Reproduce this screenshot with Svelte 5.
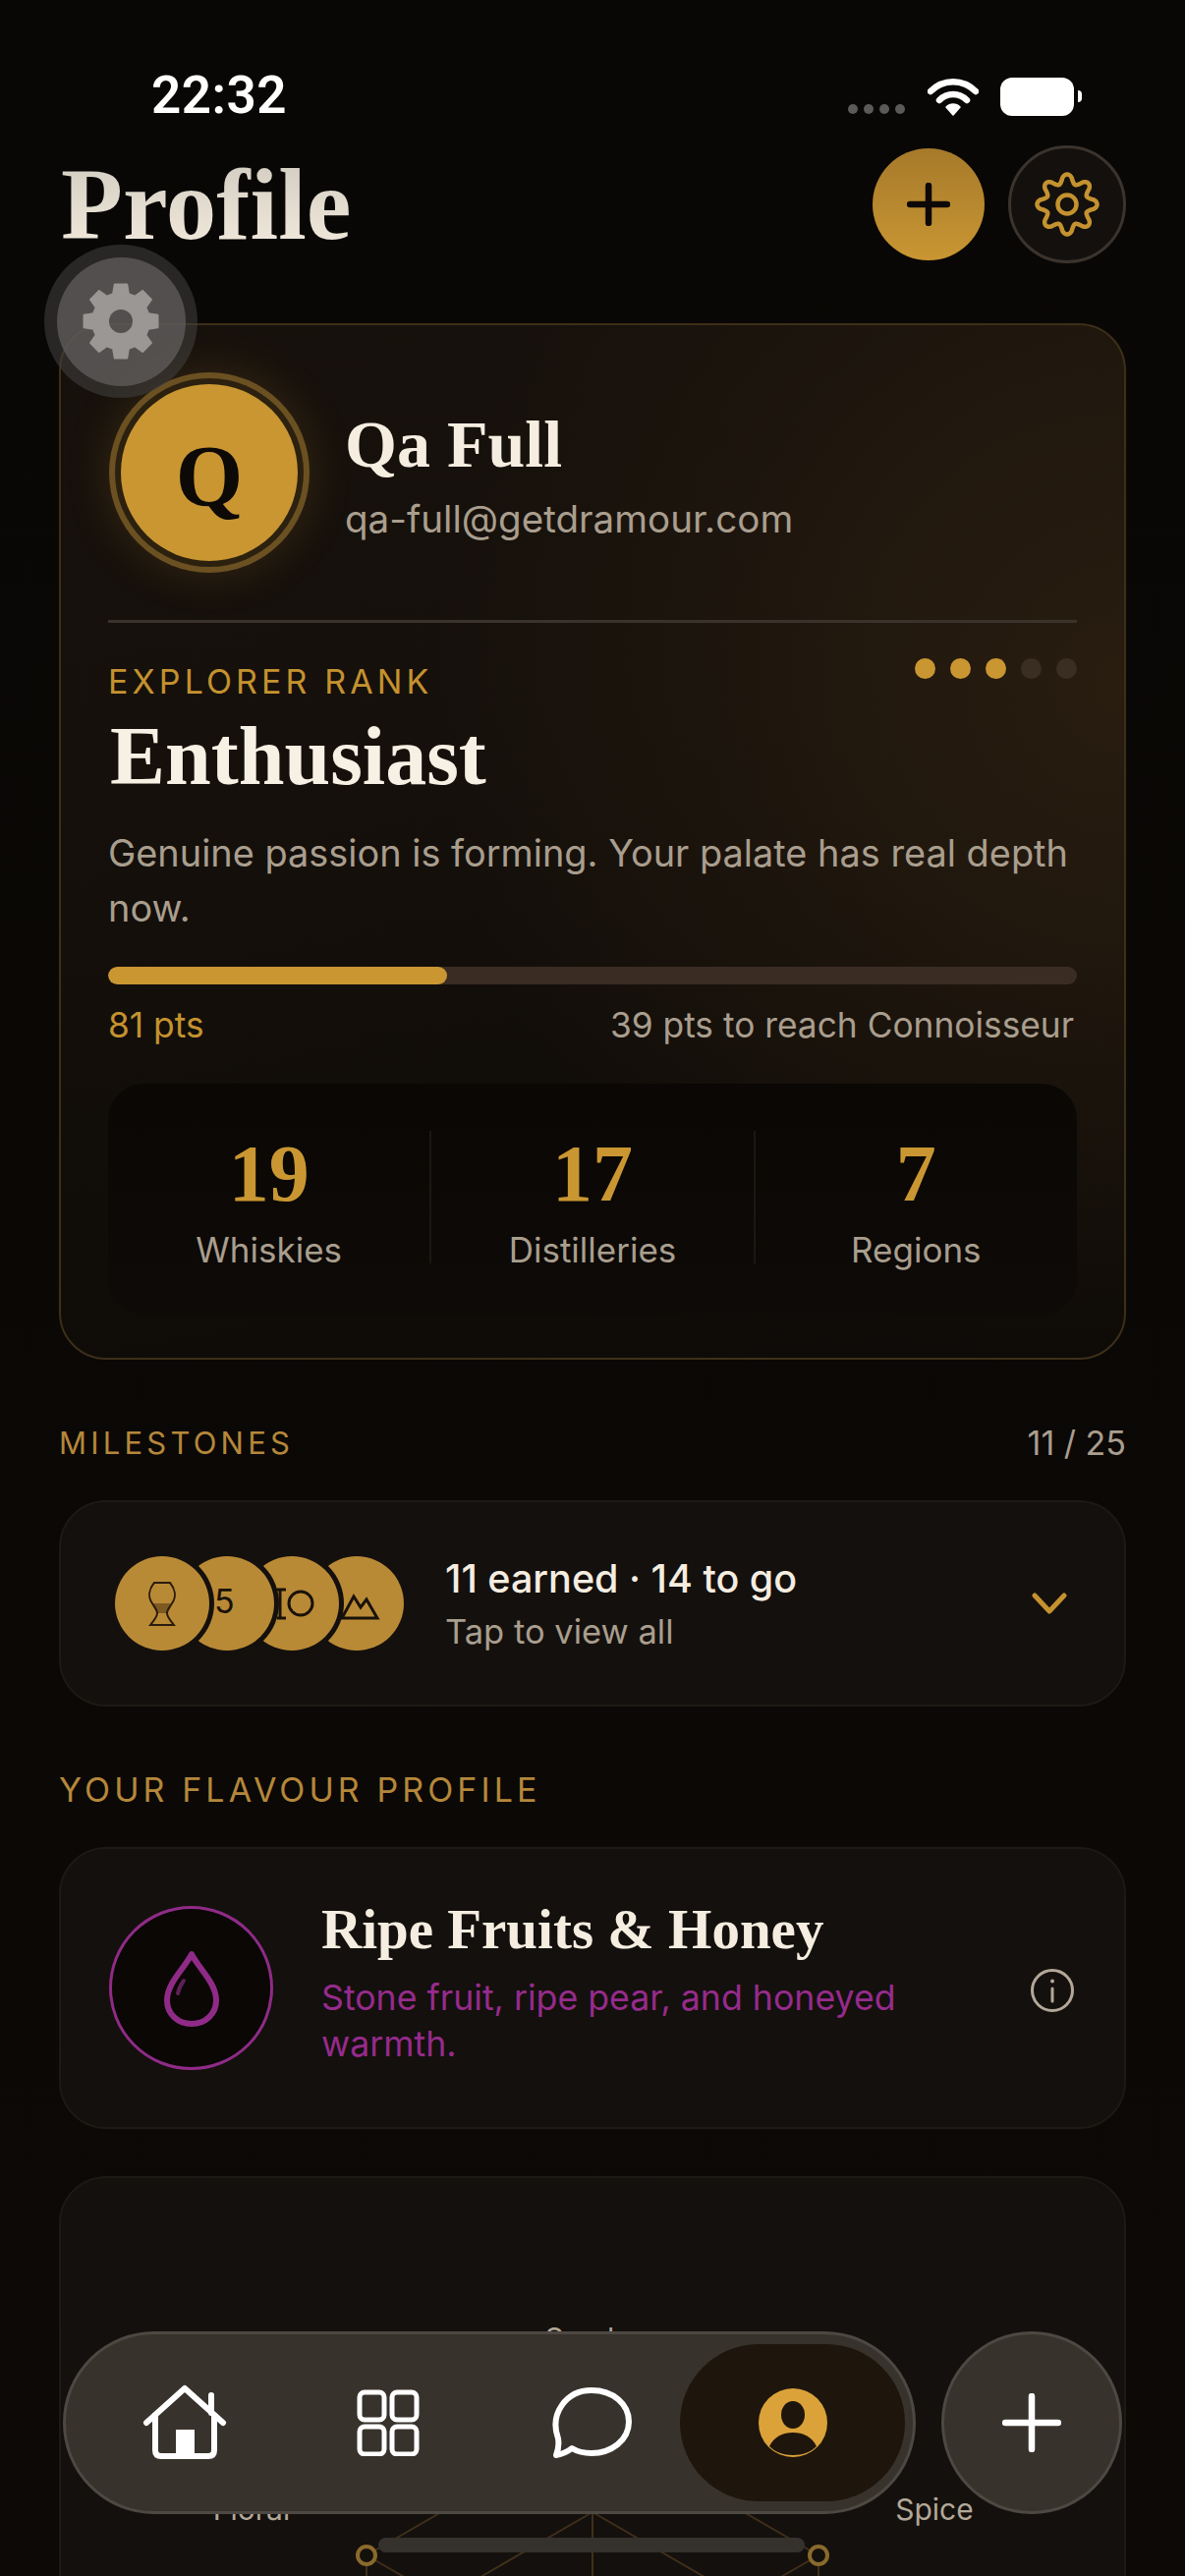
<script lang="ts">
  const stats = [
    { value: '19', label: 'Whiskies' },
    { value: '17', label: 'Distilleries' },
    { value: '7', label: 'Regions' },
  ];
  const rankDots = [true, true, true, false, false];

  // polar gear outlines, teeth = 8
  function wavyGear(cx: number, cy: number, r: number, amp: number) {
    const pts: string[] = [];
    for (let i = 0; i < 240; i++) {
      const a = (i / 240) * Math.PI * 2 - Math.PI / 2;
      const k = Math.cos(a * 8 + Math.PI * 4);
      const rad = r + amp * (k > 0 ? Math.pow(k, 0.7) : -Math.pow(-k, 0.9));
      pts.push(`${(cx + rad * Math.cos(a)).toFixed(2)} ${(cy + rad * Math.sin(a)).toFixed(2)}`);
    }
    return 'M' + pts.join('L') + 'Z';
  }

  function toothGear(cx: number, cy: number, ro: number, ri: number, hole: number) {
    const pts: string[] = [];
    for (let t = 0; t < 8; t++) {
      const c = (t / 8) * Math.PI * 2 - Math.PI / 2;
      const step = Math.PI / 8;
      [[-0.7, ri], [-0.42, ro], [0.42, ro], [0.7, ri]].forEach(([o, r]) => {
        const a = c + o * step;
        pts.push(`${(cx + r * Math.cos(a)).toFixed(2)} ${(cy + r * Math.sin(a)).toFixed(2)}`);
      });
    }
    const ring = `M${cx - hole} ${cy}a${hole} ${hole} 0 1 0 ${hole * 2} 0a${hole} ${hole} 0 1 0 ${-hole * 2} 0Z`;
    return 'M' + pts.join('L') + 'Z' + ring;
  }
</script>

<div class="page">
  <div class="status">
    <span class="time">22:32</span>
    <div class="status-right">
      <div class="signal"><i></i><i></i><i></i><i></i></div>
      <svg class="wifi" width="52" height="40" viewBox="0 0 52 40">
        <path d="M3 14 C16 1 36 1 49 14" fill="none" stroke="#fff" stroke-width="6.5" stroke-linecap="round" />
        <path d="M12 23 C20 15 32 15 40 23" fill="none" stroke="#fff" stroke-width="6.5" stroke-linecap="round" />
        <path d="M19 30 C23 26 29 26 33 30 L26 38 Z" fill="#fff" stroke="#fff" stroke-width="1.5" stroke-linejoin="round" />
      </svg>
      <div class="battery"></div>
    </div>
  </div>

  <header class="head">
    <h1>Profile</h1>
    <button class="add" aria-label="Add">
      <svg width="44" height="44" viewBox="0 0 44 44"><path d="M22 3V41M3 22H41" stroke="#0d0906" stroke-width="6.5" stroke-linecap="round" /></svg>
    </button>
    <button class="settings" aria-label="Settings">
      <svg width="70" height="70" viewBox="0 0 70 70">
        <path d={wavyGear(35, 35, 26, 4.5)} fill="none" stroke="#c4922f" stroke-width="4.5" stroke-linejoin="round" />
        <circle cx="35" cy="35" r="9.5" fill="none" stroke="#c4922f" stroke-width="4.5" />
      </svg>
    </button>
  </header>

  <section class="hero">
    <div class="who">
      <div class="avatar"><span>Q</span></div>
      <div>
        <div class="name">Qa Full</div>
        <div class="email">qa-full@getdramour.com</div>
      </div>
    </div>
    <div class="rule"></div>
    <div class="rank-row">
      <span class="eyebrow">EXPLORER RANK</span>
      <div class="dots">
        {#each rankDots as on}
          <i class:on></i>
        {/each}
      </div>
    </div>
    <div class="rank">Enthusiast</div>
    <p class="blurb">Genuine passion is forming. Your palate has real depth now.</p>
    <div class="bar"><div class="fill" style="width: {(344 / 984) * 100}%"></div></div>
    <div class="pts">
      <span class="mine">81 pts</span>
      <span>39 pts to reach Connoisseur</span>
    </div>
    <div class="stats">
      {#each stats as s, i}
        {#if i > 0}<div class="sep"></div>{/if}
        <div class="stat">
          <div class="num">{s.value}</div>
          <div class="lbl">{s.label}</div>
        </div>
      {/each}
    </div>
  </section>

  <div class="sec-head first">
    <span class="sec">MILESTONES</span>
    <span class="count">11 / 25</span>
  </div>
  <section class="card miles">
    <div class="badges">
      <div class="badge b1">
        <svg width="96" height="96" viewBox="0 0 96 96">
          <path d="M39 48 Q42 54 43 58 L53 58 Q54 54 57 48Z" fill="#7d5a22" />
          <path d="M40 27 H56 C61 33 63 41 58 48 C55 53 53 55 53 58 C53 62 57 66 60 70 H36 C39 66 43 62 43 58 C43 55 41 53 38 48 C33 41 35 33 40 27Z" fill="none" stroke="#2a1c0c" stroke-width="2" />
        </svg>
      </div>
      <div class="badge b2"><span>5</span></div>
      <div class="badge b3">
        <svg width="96" height="96" viewBox="0 0 96 96">
          <path d="M33 34H42M33 63H42M36 34V63" fill="none" stroke="#1a1209" stroke-width="3" />
          <circle cx="57" cy="48" r="12" fill="none" stroke="#1a1209" stroke-width="3" />
        </svg>
      </div>
      <div class="badge b4">
        <svg width="96" height="96" viewBox="0 0 96 96">
          <path d="M33 63 L45 41 L52 52 L58 44 L69 63 Z" fill="none" stroke="#1a1209" stroke-width="3" stroke-linejoin="miter" />
        </svg>
      </div>
    </div>
    <div class="miles-text">
      <div class="earned">11 earned · 14 to go</div>
      <div class="tap">Tap to view all</div>
    </div>
    <svg class="chev" width="36" height="24" viewBox="0 0 36 24"><path d="M3 4 L18 20 L33 4" fill="none" stroke="#c4922f" stroke-width="5" stroke-linecap="round" stroke-linejoin="round" /></svg>
  </section>

  <div class="sec-head second"><span class="sec big">YOUR FLAVOUR PROFILE</span></div>
  <section class="card flavour">
    <div class="drop">
      <svg width="64" height="84" viewBox="0 0 64 84">
        <path d="M32 7 C38 20 57 36 57 54 C57 68 46 78 32 78 C18 78 7 68 7 54 C7 36 26 20 32 7Z" fill="none" stroke="#8f2b87" stroke-width="6" stroke-linejoin="round" />
        <path d="M24 34 C21 38 19 42 18 47" fill="none" stroke="#5c2156" stroke-width="4" stroke-linecap="round" />
      </svg>
    </div>
    <div class="flav-text">
      <div class="flav-name">Ripe Fruits &amp; Honey</div>
      <div class="flav-desc">Stone fruit, ripe pear, and honeyed warmth.</div>
    </div>
    <svg class="info" width="46" height="46" viewBox="0 0 46 46">
      <circle cx="23" cy="23" r="20.5" fill="none" stroke="#b3a898" stroke-width="3" />
      <path d="M23 21V34" stroke="#b3a898" stroke-width="3" stroke-linecap="round" />
      <circle cx="23" cy="13.5" r="2" fill="#b3a898" />
    </svg>
  </section>

  <section class="card radar">
    <svg width="1086" height="410" viewBox="60 2216 1086 410">
      <g fill="none" stroke="#3f2f1a" stroke-width="2">
        <path d="M603 2469 L833 2602 L833 2866 M603 2469 L373 2602 L373 2866" />
        <path d="M603 2558 L755 2646 M603 2558 L451 2646" />
        <path d="M603 2469 V2734 M373 2602 L603 2734 M833 2602 L603 2734" />
      </g>
      <circle cx="373" cy="2602" r="9" fill="#14100d" stroke="#8a6a2c" stroke-width="4" />
      <circle cx="833" cy="2602" r="9" fill="#14100d" stroke="#8a6a2c" stroke-width="4" />
      <g class="axis">
        <text x="603" y="2392" text-anchor="middle">Smoke</text>
        <text x="256" y="2566" text-anchor="middle">Floral</text>
        <text x="951" y="2566" text-anchor="middle">Spice</text>
      </g>
    </svg>
  </section>

  <div class="home-bar"></div>

  <div class="assist">
    <div class="assist-in">
      <svg width="84" height="84" viewBox="0 0 84 84">
        <path d={toothGear(42, 42, 38, 29, 13)} fill="#9a9795" fill-rule="evenodd" stroke="#9a9795" stroke-width="2" stroke-linejoin="round" />
      </svg>
    </div>
  </div>

  <nav class="tabs">
    <div class="pill">
      <div class="tab home">
        <svg width="90" height="80" viewBox="0 0 90 80">
          <path d="M6 40 L45 5 L84 40" fill="none" stroke="#fff" stroke-width="6" stroke-linecap="round" stroke-linejoin="round" />
          <path d="M72 12V30" stroke="#fff" stroke-width="6" stroke-linecap="round" />
          <path d="M15 30V68Q15 74 21 74H69Q75 74 75 68V30" fill="none" stroke="#fff" stroke-width="6" />
          <rect x="36" y="47" width="19" height="28" fill="#fff" />
        </svg>
      </div>
      <div class="tab grid">
        <svg width="66" height="68" viewBox="0 0 66 68">
          <rect x="4" y="3" width="25" height="28" rx="5" fill="none" stroke="#fff" stroke-width="5" />
          <rect x="37" y="3" width="25" height="28" rx="5" fill="none" stroke="#fff" stroke-width="5" />
          <rect x="4" y="38" width="25" height="28" rx="5" fill="none" stroke="#fff" stroke-width="5" />
          <rect x="37" y="38" width="25" height="28" rx="5" fill="none" stroke="#fff" stroke-width="5" />
        </svg>
      </div>
      <div class="tab chat">
        <svg width="84" height="72" viewBox="0 0 84 72">
          <path d="M8 52 C-1 27 16 3 42 3 C64 3 80 17 80 35 C80 54 62 67 42 67 C34 67 27 65 22 62 C17 66 12 68 6 69 C8 64 9 58 8 52Z" fill="none" stroke="#fff" stroke-width="6" stroke-linejoin="round" />
        </svg>
      </div>
      <div class="tab active">
        <svg width="72" height="72" viewBox="0 0 72 72">
          <circle cx="36" cy="36" r="35" fill="#dca23a" />
          <ellipse cx="36" cy="28" rx="12" ry="14" fill="#1e160c" />
          <path d="M12 60 C17 50 26 46 36 46 C46 46 55 50 60 60 C54 66 46 69 36 69 C26 69 18 66 12 60Z" fill="#1e160c" />
        </svg>
      </div>
    </div>
    <div class="fab">
      <svg width="60" height="60" viewBox="0 0 60 60"><path d="M30 3V57M3 30H57" stroke="#fff" stroke-width="6.5" stroke-linecap="round" /></svg>
    </div>
  </nav>
</div>

<style>
  :global(body) {
    margin: 0;
    background: #0b0806;
  }

  .page {
    position: relative;
    width: 1206px;
    height: 2622px;
    overflow: hidden;
    box-sizing: border-box;
    padding: 0 60px;
    background: linear-gradient(#090705, #0c0907);
    font-family: Inter, "Liberation Sans", sans-serif;
    color: #f5ede0;
  }

  .status {
    height: 148px;
    margin: 0 -60px;
    padding: 0 113px 0 154px;
    box-sizing: border-box;
    display: flex;
    justify-content: space-between;
    align-items: flex-start;
  }

  .time {
    margin-top: 69px;
    font-size: 53px;
    line-height: 56px;
    font-weight: 600;
    color: #fff;
    font-family: Roboto, sans-serif;
    letter-spacing: 0.5px;
  }

  .status-right {
    margin-top: 79px;
    display: flex;
    align-items: flex-start;
  }

  .signal {
    display: flex;
    gap: 6px;
    margin-top: 27px;
    margin-right: 23px;
  }

  .signal i {
    width: 10px;
    height: 10px;
    border-radius: 50%;
    background: #5a5a5a;
  }

  .wifi {
    margin-right: 22px;
  }

  .battery {
    position: relative;
    width: 75px;
    height: 39px;
    border-radius: 12px;
    background: #fff;
  }

  .battery::after {
    content: '';
    position: absolute;
    right: -8px;
    top: 13px;
    width: 4px;
    height: 12px;
    border-radius: 0 4px 4px 0;
    background: #fff;
  }

  .head {
    display: flex;
    align-items: center;
    height: 120px;
  }

  h1 {
    margin: 0 auto 0 2px;
    font-family: "Liberation Serif", serif;
    font-size: 103px;
    line-height: 120px;
    font-weight: 700;
    background: linear-gradient(#cfc9be, #f5eddf);
    -webkit-background-clip: text;
    background-clip: text;
    color: transparent;
  }

  button {
    padding: 0;
    border: none;
    border-radius: 50%;
    display: flex;
    align-items: center;
    justify-content: center;
  }

  .add {
    width: 114px;
    height: 114px;
    margin-right: 24px;
    background: linear-gradient(#a67a2b, #c99632);
  }

  .settings {
    width: 120px;
    height: 120px;
    background: #14100d;
    border: 3px solid #3b332d;
  }

  .hero {
    margin-top: 61px;
    box-sizing: border-box;
    height: 1055px;
    padding: 48px 48px 0;
    border: 2px solid #3d2f18;
    border-radius: 48px;
    background:
      radial-gradient(700px 700px at 100% 35%, #291d10 0%, transparent 100%),
      linear-gradient(170deg, #17110c 0%, #15100b 40%, #0d0a07 100%);
  }

  .who {
    display: flex;
    align-items: center;
    gap: 37px;
  }

  .avatar {
    width: 180px;
    height: 180px;
    margin: 12px 12px 12px 13px;
    flex: none;
    border-radius: 50%;
    background: #c99632;
    box-shadow: 0 0 0 6px #2c210f, 0 0 0 12px #6b5122, 0 0 44px 14px rgba(190, 140, 50, 0.18);
    display: flex;
    align-items: center;
    justify-content: center;
  }

  .avatar span {
    margin-top: 6px;
    font-family: "Liberation Serif", serif;
    font-weight: 700;
    font-size: 88px;
    color: #0d0906;
  }

  .name {
    margin-left: -1px;
    font-family: "Liberation Serif", serif;
    font-weight: 700;
    font-size: 68px;
    line-height: 84px;
    color: #f5ede0;
  }

  .email {
    margin-top: 10px;
    margin-left: -1px;
    font-size: 38.6px;
    line-height: 48px;
    color: #a99e8e;
  }

  .rule {
    height: 3px;
    margin-top: 48px;
    background: #3a322b;
  }

  .rank-row {
    display: flex;
    justify-content: space-between;
    align-items: flex-start;
    margin-top: 41px;
  }

  .eyebrow {
    font-size: 34px;
    line-height: 38px;
    letter-spacing: 4.1px;
    color: #c4922f;
  }

  .dots {
    display: flex;
    gap: 15px;
    margin-top: -5px;
  }

  .dots i {
    width: 21px;
    height: 21px;
    border-radius: 50%;
    background: #3a2d22;
  }

  .dots i.on {
    background: #c99632;
  }

  .rank {
    margin: 12px 0 0 2px;
    font-family: "Liberation Serif", serif;
    font-weight: 700;
    font-size: 84px;
    line-height: 90px;
    color: #f7f0e4;
  }

  .blurb {
    margin: 25px 0 0;
    font-size: 37.9px;
    line-height: 56px;
    color: #a99e8e;
  }

  .bar {
    height: 18px;
    margin-top: 32px;
    border-radius: 9px;
    background: #3a2c23;
    overflow: hidden;
  }

  .fill {
    height: 100%;
    border-radius: 9px;
    background: #c99632;
  }

  .pts {
    display: flex;
    justify-content: space-between;
    margin-top: 20px;
    padding-right: 3px;
    font-size: 35.3px;
    line-height: 44px;
    color: #a99e8e;
  }

  .mine {
    color: #c4922f;
  }

  .stats {
    display: flex;
    align-items: center;
    height: 236px;
    margin-top: 37px;
    border-radius: 36px;
    background: linear-gradient(#0a0705, #0d0a07);
  }

  .stat {
    flex: 1;
    text-align: center;
    padding-top: 6px;
  }

  .sep {
    width: 2px;
    height: 135px;
    margin-top: -6px;
    background: #1c1713;
  }

  .num {
    font-family: "Liberation Serif", serif;
    font-weight: 700;
    font-size: 82px;
    line-height: 80px;
    color: #c99632;
  }

  .lbl {
    margin-top: 15px;
    font-size: 35px;
    line-height: 44px;
    color: #a99e8e;
  }

  .sec-head {
    display: flex;
    justify-content: space-between;
    align-items: center;
    height: 44px;
  }

  .first {
    margin-top: 62px;
  }

  .second {
    margin-top: 62px;
  }

  .sec {
    font-size: 31px;
    letter-spacing: 4.2px;
    color: #b5873a;
  }

  .sec.big {
    font-size: 34px;
    letter-spacing: 4.1px;
  }

  .count {
    font-size: 34px;
    color: #a99e8e;
  }

  .card {
    box-sizing: border-box;
    border: 2px solid #1d1915;
    border-radius: 48px;
    background: #14100d;
  }

  .miles {
    display: flex;
    align-items: center;
    height: 210px;
    margin-top: 37px;
    padding: 0 50px 0 55px;
  }

  .badges {
    display: flex;
    flex: none;
    width: 294px;
    margin-right: 42px;
  }

  .badge {
    position: relative;
    flex: none;
    width: 96px;
    height: 96px;
    border-radius: 50%;
    background: #b98a36;
    box-shadow: 0 0 0 5px #14100d;
    overflow: hidden;
  }

  .badge + .badge {
    margin-left: -30px;
  }

  .b1 { z-index: 4; }
  .b2 { z-index: 3; }
  .b3 { z-index: 2; }
  .b4 { z-index: 1; }

  .badge svg {
    display: block;
  }

  .b2 span {
    position: absolute;
    left: 35px;
    top: 26px;
    font-size: 34px;
    line-height: 40px;
    color: #1a1209;
  }

  .miles-text {
    flex: 1;
  }

  .earned {
    font-size: 39.5px;
    line-height: 52px;
    font-weight: 500;
    color: #f5ede0;
  }

  .tap {
    margin-top: 6px;
    font-size: 34.5px;
    line-height: 44px;
    color: #a99e8e;
  }

  .chev {
    margin-right: 8px;
  }

  .flavour {
    display: flex;
    align-items: center;
    height: 287px;
    margin-top: 37px;
    padding: 0 50px 0 49px;
  }

  .drop {
    flex: none;
    box-sizing: border-box;
    width: 167px;
    height: 167px;
    margin-right: 49px;
    border: 3px solid #8f2b87;
    border-radius: 50%;
    background: #0a0705;
    display: flex;
    align-items: center;
    justify-content: center;
  }

  .flav-text {
    flex: 1;
    padding: 0 110px 16px 0;
  }

  .flav-name {
    font-family: "Liberation Serif", serif;
    font-weight: 700;
    font-size: 57px;
    line-height: 72px;
    color: #f5ede0;
  }

  .flav-desc {
    margin-top: 10px;
    font-size: 35.7px;
    line-height: 47px;
    color: #962b8c;
  }

  .info {
    flex: none;
    margin: 4px 0 0 0;
  }

  .radar {
    height: 500px;
    margin-top: 48px;
  }

  .radar svg {
    display: block;
    margin: -2px;
  }

  .axis text {
    font-family: Inter, sans-serif;
    font-size: 30px;
    fill: #b3a898;
  }

  .home-bar {
    position: absolute;
    left: 385px;
    top: 2583px;
    width: 434px;
    height: 15px;
    border-radius: 8px;
    background: #35322e;
  }

  .assist {
    position: absolute;
    left: 45px;
    top: 249px;
    width: 156px;
    height: 156px;
    border-radius: 50%;
    background: rgba(68, 66, 64, 0.55);
    display: flex;
    align-items: center;
    justify-content: center;
  }

  .assist-in {
    width: 131px;
    height: 131px;
    border-radius: 50%;
    background: rgba(96, 94, 92, 0.75);
    display: flex;
    align-items: center;
    justify-content: center;
  }

  .tabs {
    position: absolute;
    left: 64px;
    top: 2373px;
    display: flex;
    gap: 26px;
  }

  .pill {
    box-sizing: border-box;
    width: 868px;
    height: 186px;
    padding: 10px 0;
    display: flex;
    border: 3px solid #4d4842;
    border-radius: 93px;
    background: #38322c;
  }

  .tab {
    flex: none;
    display: flex;
    align-items: center;
    justify-content: center;
  }

  .home {
    width: 242px;
  }

  .grid {
    width: 172px;
  }

  .chat {
    width: 181px;
    padding-left: 30px;
  }

  .active {
    width: 229px;
    border-radius: 80px;
    background: #1e160c;
  }

  .fab {
    box-sizing: border-box;
    width: 184px;
    height: 186px;
    border: 3px solid #4d4842;
    border-radius: 50%;
    background: #38322c;
    display: flex;
    align-items: center;
    justify-content: center;
  }
</style>
